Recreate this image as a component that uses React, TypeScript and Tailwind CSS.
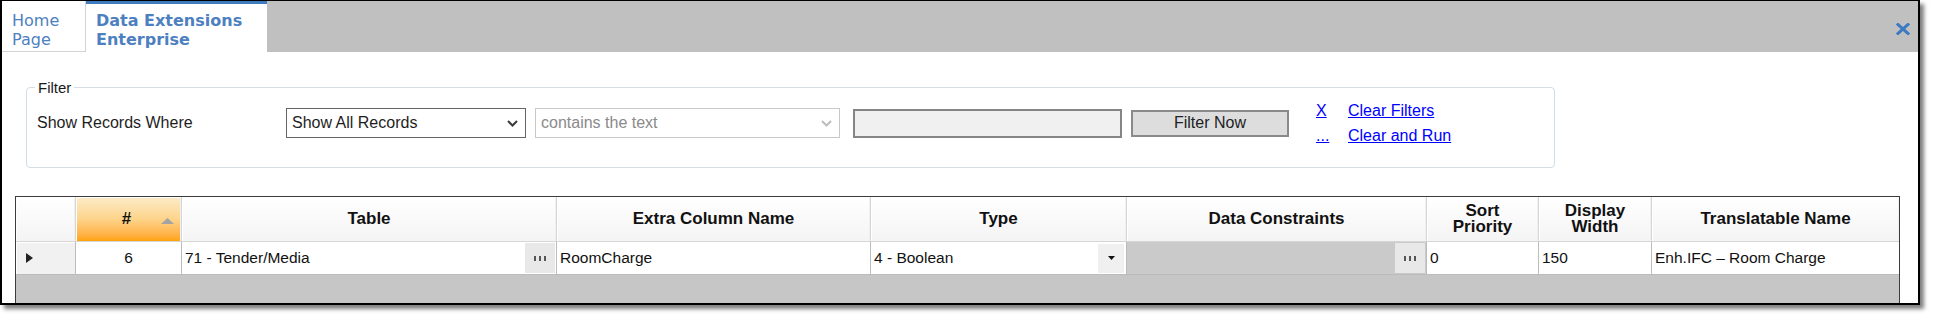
const headCols = [
  { id: "rh", w: "w-[60px]", label: "" },
  { id: "num", w: "w-[106px]", label: "#" },
  { id: "table", w: "w-[375px]", label: "Table" },
  { id: "extra", w: "w-[314px]", label: "Extra Column Name" },
  { id: "type", w: "w-[256px]", label: "Type" },
  { id: "dc", w: "w-[300px]", label: "Data Constraints" },
  { id: "sort", w: "w-[112px]", label: "Sort\nPriority" },
  { id: "disp", w: "w-[113px]", label: "Display\nWidth" },
  { id: "trans", w: "w-[247px]", label: "Translatable Name" },
];

function Chevron({ className }: { className: string }) {
  return (
    <svg viewBox="0 0 11 7" className={className} fill="none" stroke="currentColor" strokeWidth="2">
      <polyline points="1,1 5.5,5.5 10,1" />
    </svg>
  );
}

function EllipsisButton() {
  return (
    <div className="mr-px flex h-[30px] w-[30px] shrink-0 items-center justify-center gap-[3px] bg-[#e8e8e8]">
      <span className="h-[5px] w-[2px] bg-[#555]" />
      <span className="h-[5px] w-[2px] bg-[#555]" />
      <span className="h-[5px] w-[2px] bg-[#555]" />
    </div>
  );
}

function HeadCell({ col }: { col: (typeof headCols)[number] }) {
  const isNum = col.id === "num";
  const isLast = col.id === "trans";
  return (
    <div
      className={`relative flex h-[45px] shrink-0 items-center justify-center whitespace-pre-line border-b border-[#d6d6d6] text-center text-[17px] font-bold leading-[16px] text-[#111] shadow-[inset_1px_1px_0_#fff,inset_-1px_0_0_#f0f0f0] ${col.w} ${
        isLast ? "" : "border-r"
      } ${isNum ? "bg-linear-to-b from-[#fcebc9] via-[#fdd48a] to-[#ffa300] pr-[4px]" : "bg-linear-to-b from-white to-[#f4f4f4]"}`}
    >
      {col.label}
      {isNum && (
        <svg viewBox="0 0 13 6" className="absolute right-[7px] top-[21px] h-[6px] w-[13px]">
          <polygon points="0,6 6.5,0 13,6" fill="#a3a3a3" />
        </svg>
      )}
    </div>
  );
}

export default function App() {
  return (
    <div className="h-[320px] w-[1935px] bg-white font-['Liberation_Sans',Arial,sans-serif]">
      <div className="flex h-[305px] w-[1920px] flex-col border-2 border-t border-black shadow-[4px_4px_4px_rgba(0,0,0,0.5)]">
        {/* tab strip */}
        <div className="flex h-[51px] shrink-0 bg-[#c0c0c0] font-['DejaVu_Sans',Verdana,sans-serif] text-[16px] leading-[19px] text-[#4d80c0]">
          <div className="w-[84px] border-r border-b border-[#d4d4d4] bg-white pl-[10px] pt-[10px]">
            Home
            <br />
            Page
          </div>
          <div className="w-[181px] border-t-[3px] border-[#3f7cbf] bg-white pl-[10px] pt-[7px] font-bold">
            Data Extensions
            <br />
            Enterprise
          </div>
          <div className="flex flex-1 items-start justify-end pr-[8px] pt-[22px]">
            <svg viewBox="0 0 14 12" className="h-[12px] w-[14px]" stroke="#3b79c2" strokeWidth="3" strokeLinecap="square">
              <line x1="2" y1="1.5" x2="12" y2="10.5" />
              <line x1="12" y1="1.5" x2="2" y2="10.5" />
            </svg>
          </div>
        </div>

        {/* filter group */}
        <fieldset className="ml-[24px] mt-[27px] w-[1529px] shrink-0 rounded-[4px] border border-[#d3dde4]">
          <legend className="ml-[8px] px-[3px] text-[15px] leading-[17px] text-[#1a1a1a]">Filter</legend>
          <div className="pb-[29px] pl-[10px] pt-[12px] text-[16px] text-[#1e1e1e]">
            <div className="flex h-[30px] items-center">
              <div className="w-[249px] shrink-0">Show Records Where</div>
              <div className="flex h-[30px] w-[240px] shrink-0 items-center justify-between border border-[#646464] bg-white pl-[5px] pr-[7px]">
                <span>Show All Records</span>
                <Chevron className="h-[7px] w-[11px] text-[#3a3a3a]" />
              </div>
              <div className="ml-[9px] flex h-[30px] w-[305px] shrink-0 items-center justify-between border border-[#c9c9c9] bg-white pl-[5px] pr-[7px] text-[#8a8a8a]">
                <span>contains the text</span>
                <Chevron className="h-[7px] w-[11px] text-[#bdbdbd]" />
              </div>
              <div className="ml-[13px] h-[29px] w-[269px] shrink-0 border-2 border-[#858585] bg-[#f0f0f0]" />
              <div className="ml-[9px] flex h-[27px] w-[158px] shrink-0 items-center justify-center border-2 border-[#8a8a8a] bg-[#dddddd] text-[#222]">
                Filter Now
              </div>
              <div className="ml-[27px] grid shrink-0 grid-cols-[32px_auto] leading-[25px] text-[#0000ff]">
                <span className="underline">X</span>
                <span className="underline">Clear Filters</span>
                <span className="underline">...</span>
                <span className="underline">Clear and Run</span>
              </div>
            </div>
          </div>
        </fieldset>

        {/* grid */}
        <div className="ml-[13px] mt-[28px] flex w-[1885px] flex-1 flex-col border-x border-t border-[#3c3c3c] bg-[#c6c6c6]">
          <div className="flex">
            {headCols.map((c) => (
              <HeadCell key={c.id} col={c} />
            ))}
          </div>
          <div className="flex h-[33px] text-[15.5px] text-[#111]">
            <div className="flex w-[60px] shrink-0 items-center border-r border-b border-[#bcbcbc] bg-[#f1f1f1] pl-[10px] shadow-[inset_1px_1px_0_#fff]">
              <svg viewBox="0 0 7 10" className="h-[10px] w-[7px]">
                <polygon points="0,0 7,5 0,10" fill="#222" />
              </svg>
            </div>
            <div className="flex w-[106px] shrink-0 items-center justify-center border-r border-b border-[#bcbcbc] bg-white">6</div>
            <div className="flex w-[375px] shrink-0 items-center justify-between border-r border-b border-[#bcbcbc] bg-white pl-[3px]">
              <span>71 - Tender/Media</span>
              <EllipsisButton />
            </div>
            <div className="flex w-[314px] shrink-0 items-center border-r border-b border-[#bcbcbc] bg-white pl-[3px]">RoomCharge</div>
            <div className="flex w-[256px] shrink-0 items-center justify-between border-r border-b border-[#bcbcbc] bg-white pl-[3px]">
              <span>4 - Boolean</span>
              <div className="mr-[2px] flex h-[29px] w-[26px] items-center justify-center bg-[#f0f0f0]">
                <svg viewBox="0 0 7 4" className="h-[4px] w-[7px]">
                  <polygon points="0,0 7,0 3.5,4" fill="#111" />
                </svg>
              </div>
            </div>
            <div className="flex w-[300px] shrink-0 items-center justify-end border-r border-b border-[#bcbcbc] bg-[#cacaca]">
              <EllipsisButton />
            </div>
            <div className="flex w-[112px] shrink-0 items-center border-r border-b border-[#bcbcbc] bg-white pl-[3px]">0</div>
            <div className="flex w-[113px] shrink-0 items-center border-r border-b border-[#bcbcbc] bg-white pl-[3px]">150</div>
            <div className="flex w-[247px] shrink-0 items-center border-b border-[#bcbcbc] bg-white pl-[3px]">Enh.IFC – Room Charge</div>
          </div>
        </div>
      </div>
    </div>
  );
}
